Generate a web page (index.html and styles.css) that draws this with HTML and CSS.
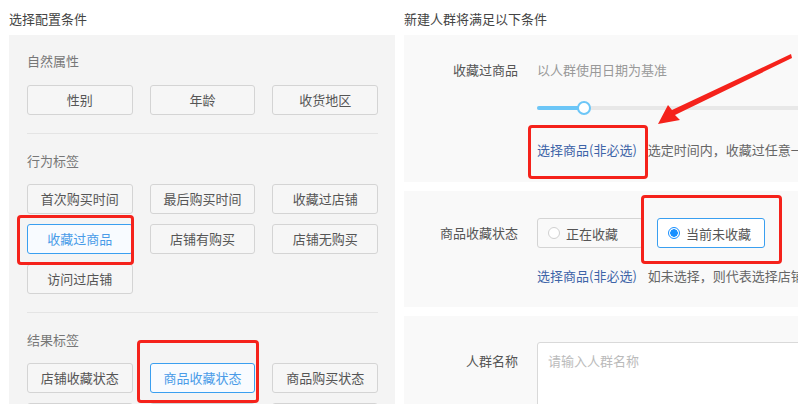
FILE: index.html
```html
<!DOCTYPE html>
<html lang="zh-CN">
<head>
    <meta charset="UTF-8">
    <title>新建人群</title>
    <link rel="stylesheet" href="styles.css">
</head>
<body>
    <div class="page">
        <div class="col-left">
            <div class="col-title">选择配置条件</div>
            <div class="tag-panel">
                <div class="tag-group">
                    <div class="group-title">自然属性</div>
                    <div class="tag-grid">
                        <div class="tag">性别</div>
                        <div class="tag">年龄</div>
                        <div class="tag">收货地区</div>
                    </div>
                </div>
                <div class="tag-group">
                    <div class="group-title">行为标签</div>
                    <div class="tag-grid">
                        <div class="tag">首次购买时间</div>
                        <div class="tag">最后购买时间</div>
                        <div class="tag">收藏过店铺</div>
                        <div class="tag active">收藏过商品</div>
                        <div class="tag">店铺有购买</div>
                        <div class="tag">店铺无购买</div>
                        <div class="tag">访问过店铺</div>
                    </div>
                </div>
                <div class="tag-group">
                    <div class="group-title">结果标签</div>
                    <div class="tag-grid">
                        <div class="tag">店铺收藏状态</div>
                        <div class="tag active">商品收藏状态</div>
                        <div class="tag">商品购买状态</div>
                        <div class="tag"></div>
                        <div class="tag"></div>
                        <div class="tag"></div>
                    </div>
                </div>
            </div>
        </div>

        <div class="col-right">
            <div class="col-title">新建人群将满足以下条件</div>

            <div class="cond">
                <div class="cond-label">收藏过商品</div>
                <div class="cond-body">
                    <div class="hint">以人群使用日期为基准</div>
                    <div class="slider">
                        <div class="slider-fill"></div>
                        <div class="slider-thumb"></div>
                    </div>
                    <div class="link-line"><span class="link">选择商品(非必选)</span>选定时间内，收藏过任意一件商品的人群</div>
                </div>
            </div>

            <div class="cond">
                <div class="cond-label tall">商品收藏状态</div>
                <div class="cond-body">
                    <div class="radio-row">
                        <div class="radio"><span class="dot"></span>正在收藏</div>
                        <div class="radio checked"><span class="dot"></span>当前未收藏</div>
                    </div>
                    <div class="link-line second"><span class="link">选择商品(非必选)</span>如未选择，则代表选择店铺所有商品</div>
                </div>
            </div>

            <div class="cond name-cond">
                <div class="cond-label input-label">人群名称</div>
                <div class="cond-body">
                    <div class="name-input">请输入人群名称</div>
                </div>
            </div>
        </div>

        <!-- annotations drawn over the screenshot -->
        <div class="mark mark-1"></div>
        <div class="mark mark-2"></div>
        <div class="mark mark-3"></div>
        <div class="mark mark-4"></div>
        <svg class="arrow" width="798" height="404" viewBox="0 0 798 404">
            <polygon points="791,54 672,110 668,105 658,124 680,120 675,115 792,58" fill="#f5221b"/>
        </svg>
    </div>
</body>
</html>
```

FILE: styles.css
```css
html, body {
    margin: 0;
    padding: 0;
    background: #fff;
    overflow: hidden;
}
body {
    font-family: "Noto Sans CJK SC", "Noto Sans", sans-serif;
    font-size: 13px;
    color: #555;
    width: 798px;
    height: 404px;
}
.page {
    position: relative;
    display: flex;
    gap: 9px;
    padding-left: 9px;
    height: 404px;
    overflow: hidden;
}
.col-title {
    line-height: 20px;
    padding-top: 9px;
    margin-bottom: 6px;
    color: #444;
}
.col-left {
    width: 386px;
    flex-shrink: 0;
}
.tag-panel {
    background: #f4f4f4;
    padding: 0 17px 0 18px;
    height: 400px;
}
.tag-group {
    padding: 16px 0 18px;
    border-bottom: 1px solid #e4e4e4;
}
.tag-group + .tag-group {
    padding-top: 17px;
}
.group-title {
    line-height: 20px;
    color: #777;
    margin-bottom: 13px;
}
.tag-group:first-child .group-title {
    margin-bottom: 14px;
}
.tag-grid {
    display: grid;
    grid-template-columns: repeat(3, 1fr);
    column-gap: 17px;
    row-gap: 10px;
}
.tag {
    height: 28px;
    line-height: 28px;
    border: 1px solid #d4d4d4;
    border-radius: 3px;
    background: #f6f6f6;
    text-align: center;
    color: #555;
}
.tag.active {
    border-color: #3a9ff0;
    color: #4a9be8;
    background: #f8fbff;
}
.col-right {
    width: 440px;
    flex-shrink: 0;
}
.cond {
    display: flex;
    gap: 19px;
    background: #f9f9f9;
    margin-bottom: 9px;
}
.cond:nth-of-type(2) {
    padding: 25px 0 22px;
}
.cond:nth-of-type(3) {
    padding: 27px 0 21px;
}
.cond-label {
    width: 114px;
    text-align: right;
    line-height: 20px;
    flex-shrink: 0;
    color: #555;
}
.cond-label.tall {
    line-height: 30px;
}
.cond-body {
    flex: 1;
    min-width: 0;
}
.hint {
    line-height: 20px;
    color: #999;
}
.slider {
    position: relative;
    height: 4px;
    background: #e8e8e8;
    border-radius: 2px;
    margin: 26px 0 30px;
}
.slider-fill {
    width: 47px;
    height: 4px;
    border-radius: 2px;
    background: #6cc6f7;
}
.slider-thumb {
    position: absolute;
    left: 40px;
    top: -5px;
    width: 14px;
    height: 14px;
    border: 2px solid #6cc6f7;
    border-radius: 50%;
    background: #fff;
    box-sizing: border-box;
}
.link-line {
    line-height: 20px;
    white-space: nowrap;
    color: #666;
}
.link-line.second {
    margin-top: 18px;
}
.link {
    color: #3e64a8;
    margin-right: 11px;
}
.radio-row {
    display: flex;
    gap: 14px;
}
.radio {
    display: flex;
    align-items: center;
    gap: 6px;
    height: 28px;
    padding: 0 10px;
    border: 1px solid #d4d4d4;
    border-radius: 3px;
    background: #f9f9f9;
    color: #555;
}
.radio:first-child {
    width: 84px;
}
.radio.checked {
    width: 86px;
    border-color: #3a9ff0;
    background: #fff;
}
.dot {
    width: 12px;
    height: 12px;
    border: 1px solid #d0d0d0;
    border-radius: 50%;
    background: #fff;
    box-sizing: border-box;
    flex-shrink: 0;
}
.checked .dot {
    border-color: #1890ff;
    background: radial-gradient(circle, #1890ff 0 3.5px, #fff 4px);
}
.name-cond {
    padding: 26px 0 0;
    height: 120px;
}
.input-label {
    line-height: 38px;
}
.name-input {
    height: 100px;
    border: 1px solid #d9d9d9;
    border-radius: 3px;
    background: #fff;
    padding: 8px 10px;
    line-height: 20px;
    color: #bbb;
}
.mark {
    position: absolute;
    border: 3px solid #f5221b;
    border-radius: 4px;
    box-sizing: border-box;
}
.mark-1 { left: 17px; top: 215px; width: 117px; height: 50px; }
.mark-2 { left: 137px; top: 340px; width: 122px; height: 63px; }
.mark-3 { left: 528px; top: 125px; width: 120px; height: 54px; }
.mark-4 { left: 641px; top: 195px; width: 141px; height: 69px; }
.arrow {
    position: absolute;
    left: 0;
    top: 0;
    pointer-events: none;
}
```
